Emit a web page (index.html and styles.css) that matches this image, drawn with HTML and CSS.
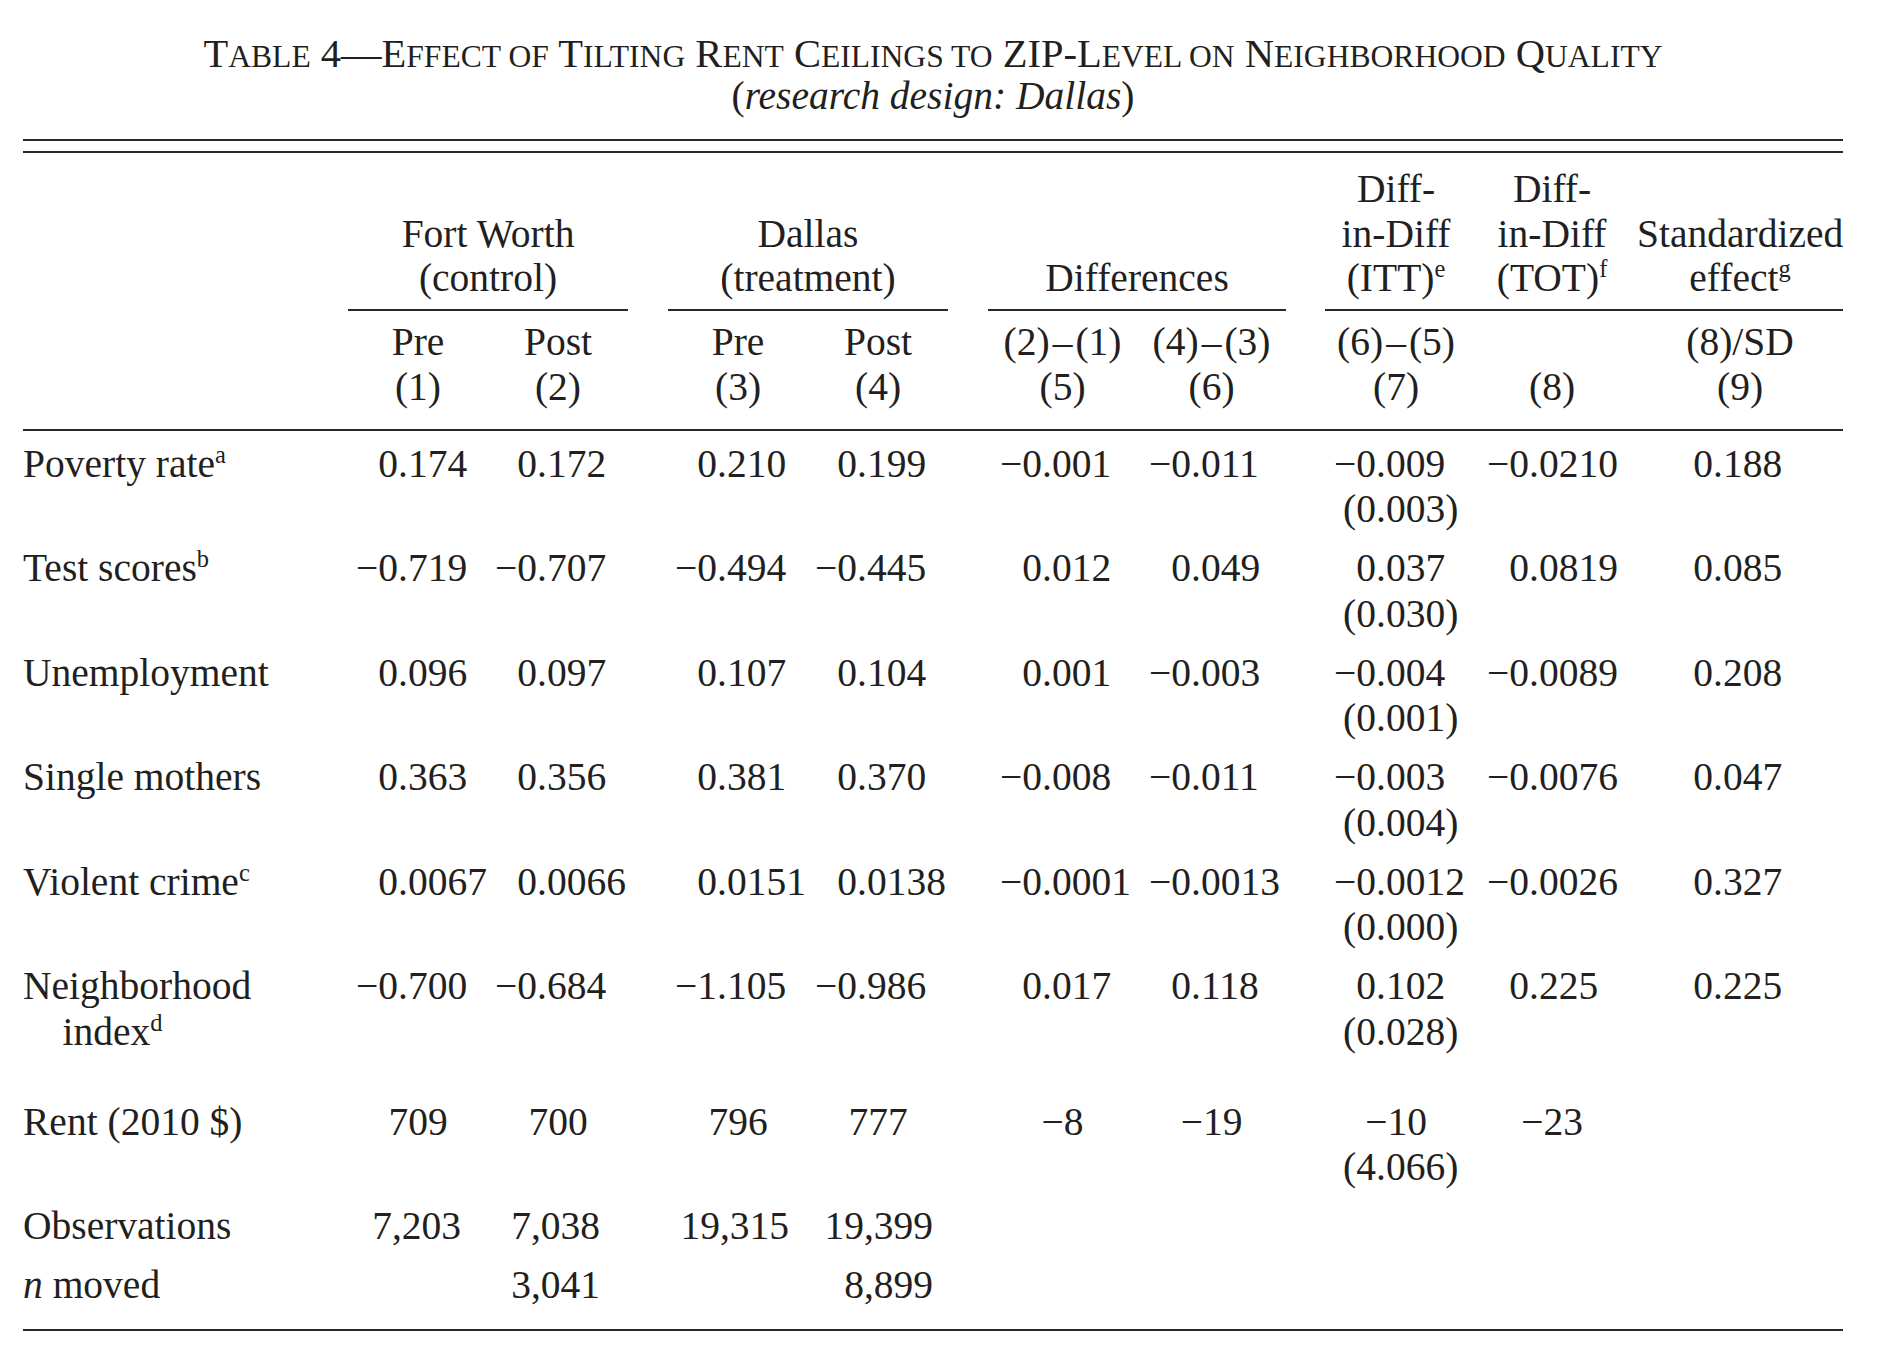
FILE: index.html
```html
<!DOCTYPE html>
<html lang="en">
<head>
<meta charset="utf-8">
<title>Table 4 — Effect of Tilting Rent Ceilings</title>
<link rel="stylesheet" href="styles.css">
</head>
<body>
<div class="page">
  <header class="caption">
    <h1 class="title">T<span class="sc">able</span> 4—E<span class="sc">ffect of</span> T<span class="sc">ilting</span> R<span class="sc">ent</span> C<span class="sc">eilings to</span> ZIP-L<span class="sc">evel on</span> N<span class="sc">eighborhood</span> Q<span class="sc">uality</span></h1>
    <p class="subtitle">(<em>research design: Dallas</em>)</p>
  </header>
  <div class="double-rule"></div>
  <table class="results">
    <colgroup>
      <col class="w-label"><col class="w-a"><col class="w-a"><col class="w-gap">
      <col class="w-a"><col class="w-a"><col class="w-gap">
      <col class="w-b"><col class="w-b"><col class="w-gap2">
      <col class="w-c7"><col class="w-c8"><col class="w-c9">
    </colgroup>
    <thead>
      <tr class="groups">
        <th></th>
        <th colspan="2" class="grp">Fort Worth<br>(control)</th>
        <th></th>
        <th colspan="2" class="grp">Dallas<br>(treatment)</th>
        <th></th>
        <th colspan="2" class="grp">Differences</th>
        <th></th>
        <th class="grp">Diff-<br>in-Diff<br>(ITT)<sup class="fn">e</sup></th>
        <th class="grp">Diff-<br>in-Diff<br>(TOT)<sup class="fn">f</sup></th>
        <th class="grp">Standardized<br>effect<sup class="fn">g</sup></th>
      </tr>
      <tr class="colnums">
        <th></th>
        <th>Pre<br>(1)</th>
        <th>Post<br>(2)</th>
        <th></th>
        <th>Pre<br>(3)</th>
        <th>Post<br>(4)</th>
        <th></th>
        <th>(2)<span class="op">–</span>(1)<br>(5)</th>
        <th>(4)<span class="op">–</span>(3)<br>(6)</th>
        <th></th>
        <th>(6)<span class="op">–</span>(5)<br>(7)</th>
        <th>(8)</th>
        <th>(8)/SD<br>(9)</th>
      </tr>
    </thead>
    <tbody>
      <tr class="first">
        <td class="lab">Poverty rate<sup class="fn">a</sup></td>
        <td><div class="n"><span class="i">0</span><span class="f">.174</span></div></td>
        <td><div class="n"><span class="i">0</span><span class="f">.172</span></div></td>
        <td></td>
        <td><div class="n"><span class="i">0</span><span class="f">.210</span></div></td>
        <td><div class="n"><span class="i">0</span><span class="f">.199</span></div></td>
        <td></td>
        <td><div class="n"><span class="i">−0</span><span class="f">.001</span></div></td>
        <td><div class="n"><span class="i">−0</span><span class="f">.011</span></div></td>
        <td></td>
        <td><div class="n"><span class="i">−0</span><span class="f">.009</span></div><div class="n"><span class="i">(0</span><span class="f">.003)</span></div></td>
        <td><div class="n"><span class="i">−0</span><span class="f">.0210</span></div></td>
        <td><div class="n"><span class="i">0</span><span class="f">.188</span></div></td>
      </tr>
      <tr>
        <td class="lab">Test scores<sup class="fn">b</sup></td>
        <td><div class="n"><span class="i">−0</span><span class="f">.719</span></div></td>
        <td><div class="n"><span class="i">−0</span><span class="f">.707</span></div></td>
        <td></td>
        <td><div class="n"><span class="i">−0</span><span class="f">.494</span></div></td>
        <td><div class="n"><span class="i">−0</span><span class="f">.445</span></div></td>
        <td></td>
        <td><div class="n"><span class="i">0</span><span class="f">.012</span></div></td>
        <td><div class="n"><span class="i">0</span><span class="f">.049</span></div></td>
        <td></td>
        <td><div class="n"><span class="i">0</span><span class="f">.037</span></div><div class="n"><span class="i">(0</span><span class="f">.030)</span></div></td>
        <td><div class="n"><span class="i">0</span><span class="f">.0819</span></div></td>
        <td><div class="n"><span class="i">0</span><span class="f">.085</span></div></td>
      </tr>
      <tr>
        <td class="lab">Unemployment</td>
        <td><div class="n"><span class="i">0</span><span class="f">.096</span></div></td>
        <td><div class="n"><span class="i">0</span><span class="f">.097</span></div></td>
        <td></td>
        <td><div class="n"><span class="i">0</span><span class="f">.107</span></div></td>
        <td><div class="n"><span class="i">0</span><span class="f">.104</span></div></td>
        <td></td>
        <td><div class="n"><span class="i">0</span><span class="f">.001</span></div></td>
        <td><div class="n"><span class="i">−0</span><span class="f">.003</span></div></td>
        <td></td>
        <td><div class="n"><span class="i">−0</span><span class="f">.004</span></div><div class="n"><span class="i">(0</span><span class="f">.001)</span></div></td>
        <td><div class="n"><span class="i">−0</span><span class="f">.0089</span></div></td>
        <td><div class="n"><span class="i">0</span><span class="f">.208</span></div></td>
      </tr>
      <tr>
        <td class="lab">Single mothers</td>
        <td><div class="n"><span class="i">0</span><span class="f">.363</span></div></td>
        <td><div class="n"><span class="i">0</span><span class="f">.356</span></div></td>
        <td></td>
        <td><div class="n"><span class="i">0</span><span class="f">.381</span></div></td>
        <td><div class="n"><span class="i">0</span><span class="f">.370</span></div></td>
        <td></td>
        <td><div class="n"><span class="i">−0</span><span class="f">.008</span></div></td>
        <td><div class="n"><span class="i">−0</span><span class="f">.011</span></div></td>
        <td></td>
        <td><div class="n"><span class="i">−0</span><span class="f">.003</span></div><div class="n"><span class="i">(0</span><span class="f">.004)</span></div></td>
        <td><div class="n"><span class="i">−0</span><span class="f">.0076</span></div></td>
        <td><div class="n"><span class="i">0</span><span class="f">.047</span></div></td>
      </tr>
      <tr>
        <td class="lab">Violent crime<sup class="fn">c</sup></td>
        <td><div class="n"><span class="i">0</span><span class="f">.0067</span></div></td>
        <td><div class="n"><span class="i">0</span><span class="f">.0066</span></div></td>
        <td></td>
        <td><div class="n"><span class="i">0</span><span class="f">.0151</span></div></td>
        <td><div class="n"><span class="i">0</span><span class="f">.0138</span></div></td>
        <td></td>
        <td><div class="n"><span class="i">−0</span><span class="f">.0001</span></div></td>
        <td><div class="n"><span class="i">−0</span><span class="f">.0013</span></div></td>
        <td></td>
        <td><div class="n"><span class="i">−0</span><span class="f">.0012</span></div><div class="n"><span class="i">(0</span><span class="f">.000)</span></div></td>
        <td><div class="n"><span class="i">−0</span><span class="f">.0026</span></div></td>
        <td><div class="n"><span class="i">0</span><span class="f">.327</span></div></td>
      </tr>
      <tr class="tall">
        <td class="lab hang">Neighborhood<br>index<sup class="fn">d</sup></td>
        <td><div class="n"><span class="i">−0</span><span class="f">.700</span></div></td>
        <td><div class="n"><span class="i">−0</span><span class="f">.684</span></div></td>
        <td></td>
        <td><div class="n"><span class="i">−1</span><span class="f">.105</span></div></td>
        <td><div class="n"><span class="i">−0</span><span class="f">.986</span></div></td>
        <td></td>
        <td><div class="n"><span class="i">0</span><span class="f">.017</span></div></td>
        <td><div class="n"><span class="i">0</span><span class="f">.118</span></div></td>
        <td></td>
        <td><div class="n"><span class="i">0</span><span class="f">.102</span></div><div class="n"><span class="i">(0</span><span class="f">.028)</span></div></td>
        <td><div class="n"><span class="i">0</span><span class="f">.225</span></div></td>
        <td><div class="n"><span class="i">0</span><span class="f">.225</span></div></td>
      </tr>
      <tr class="rent">
        <td class="lab">Rent (2010 $)</td>
        <td class="ctr">709</td>
        <td class="ctr">700</td>
        <td></td>
        <td class="ctr">796</td>
        <td class="ctr">777</td>
        <td></td>
        <td class="ctr">−8</td>
        <td class="ctr">−19</td>
        <td></td>
        <td><div class="ctr">−10</div><div class="n"><span class="i">(4</span><span class="f">.066)</span></div></td>
        <td class="ctr">−23</td>
        <td></td>
      </tr>
      <tr class="obs">
        <td class="lab">Observations</td>
        <td>7,203</td>
        <td>7,038</td>
        <td></td>
        <td>19,315</td>
        <td>19,399</td>
        <td></td>
        <td></td>
        <td></td>
        <td></td>
        <td></td>
        <td></td>
        <td></td>
      </tr>
      <tr class="obs last">
        <td class="lab"><em>n</em> moved</td>
        <td></td>
        <td>3,041</td>
        <td></td>
        <td></td>
        <td>8,899</td>
        <td></td>
        <td></td>
        <td></td>
        <td></td>
        <td></td>
        <td></td>
        <td></td>
      </tr>
    </tbody>
  </table>
</div>
</body>
</html>
```

FILE: styles.css
```css
* {
  box-sizing: border-box;
}

html,
body {
  margin: 0;
  padding: 0;
  background: #ffffff;
}

body {
  font-family: "Liberation Serif", "Times New Roman", Times, serif;
  font-size: 39.5px;
  color: #231f20;
}

.page {
  width: 1820px;
  margin-left: 23px;
  padding-top: 33px;
}

/* ---------- caption ---------- */
.caption {
  text-align: center;
}

.title {
  margin: 0;
  font-size: 40.5px;
  font-weight: normal;
  line-height: 42px;
  white-space: nowrap;
}

.title .sc {
  font-size: 0.78em;
  line-height: 0;
  text-transform: uppercase;
}

.subtitle {
  margin: 0;
  line-height: 42px;
}

.double-rule {
  margin-top: 22px;
  height: 14px;
  border-top: 2px solid #2a2728;
  border-bottom: 2px solid #2a2728;
}

/* ---------- table ---------- */
.results {
  width: 1820px;
  table-layout: fixed;
  border-collapse: separate;
  border-spacing: 0;
  font-size: 39.5px;
  line-height: 45.5px;
  border-bottom: 2px solid #2a2728;
}

.w-label { width: 325px; }
.w-a { width: 140px; }
.w-gap { width: 40px; }
.w-b { width: 149px; }
.w-gap2 { width: 39px; }
.w-c7 { width: 142px; }
.w-c8 { width: 170px; }
.w-c9 { width: 206px; }

.results th {
  font-weight: normal;
  text-align: center;
  padding: 0;
  white-space: nowrap;
}

.groups th {
  vertical-align: bottom;
  line-height: 44.5px;
  padding-top: 14px;
  padding-bottom: 8px;
}

.groups th.grp {
  border-bottom: 2px solid #2a2728;
}

.colnums th {
  vertical-align: bottom;
  padding-top: 9px;
  padding-bottom: 18px;
  border-bottom: 2px solid #2a2728;
}

.op {
  margin: 0 3px;
}

.fn {
  font-size: 0.62em;
  line-height: 0;
  vertical-align: 0.58em;
}

.results td {
  vertical-align: top;
  padding: 0 0 13.5px;
  white-space: nowrap;
}

.results tr.first td {
  padding-top: 11px;
}

.results tr.tall td {
  padding-bottom: 44.5px;
}

.results tr.last td {
  padding-bottom: 20.5px;
}

.lab {
  text-align: left;
}

.hang {
  padding-left: 1em !important;
  text-indent: -1em;
}

/* decimal alignment: integer part right-aligned in a fixed box */
.n {
  display: flex;
}

.n .i {
  flex: none;
  width: var(--iw);
  text-align: right;
}

.n .f {
  flex: none;
}

.results td:nth-child(2) { --iw: 50px; }
.results td:nth-child(3) { --iw: 49px; }
.results td:nth-child(5) { --iw: 49px; }
.results td:nth-child(6) { --iw: 49px; }
.results td:nth-child(8) { --iw: 54px; }
.results td:nth-child(9) { --iw: 54px; }
.results td:nth-child(11) { --iw: 51px; }
.results td:nth-child(12) { --iw: 62px; }
.results td:nth-child(13) { --iw: 76px; }

.ctr {
  text-align: center;
}

/* observation counts: right aligned */
.obs td {
  text-align: right;
}

.obs td.lab {
  text-align: left;
}

.obs td:nth-child(2) { padding-right: 27px; }
.obs td:nth-child(3) { padding-right: 28px; }
.obs td:nth-child(5) { padding-right: 19px; }
.obs td:nth-child(6) { padding-right: 15px; }
```
